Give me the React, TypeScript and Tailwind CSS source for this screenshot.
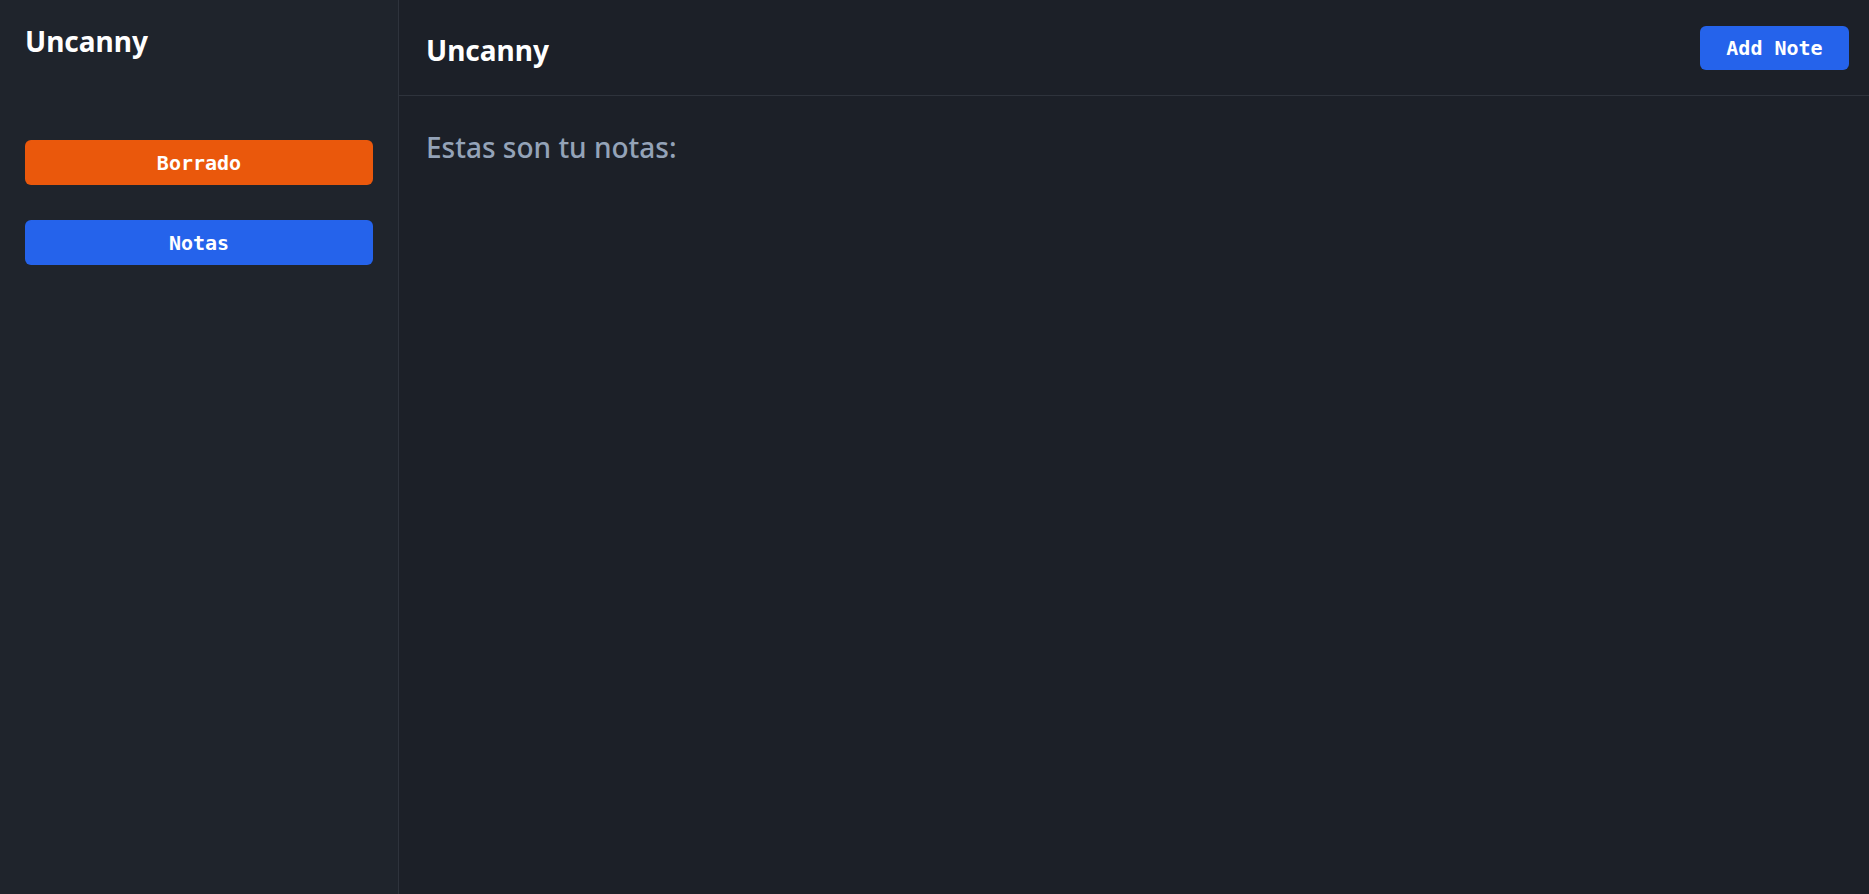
export default function App() {
  return (
    <div className="flex h-screen w-full bg-[#1c2028]" style={{ fontFamily: "'Noto Sans', 'Open Sans', sans-serif" }}>
      <aside className="flex w-[399px] shrink-0 flex-col border-r border-[#2e333c] bg-[#1f242c] px-[25px] pt-[22px]">
        <h1 className="text-[28px] font-bold leading-[38px] text-white">Uncanny</h1>
        <nav className="mt-[80px] flex flex-col gap-[35px]" style={{ fontFamily: "'DejaVu Sans Mono', monospace" }}>
          <button className="h-[45px] w-full rounded-md bg-[#ea580c] text-xl font-bold text-white">Borrado</button>
          <button className="h-[45px] w-full rounded-md bg-[#2563eb] text-xl font-bold text-white">Notas</button>
        </nav>
      </aside>
      <main className="flex flex-1 flex-col">
        <header className="flex h-[96px] items-center justify-between border-b border-[#2e333c] pl-[27px] pr-[20px]">
          <h2 className="mt-[4px] text-[28px] font-bold leading-[38px] text-white">Uncanny</h2>
          <button
            className="h-[44px] w-[149px] rounded-md bg-[#2563eb] text-xl font-bold text-white"
            style={{ fontFamily: "'DejaVu Sans Mono', monospace" }}
          >
            Add Note
          </button>
        </header>
        <section className="pl-[27px] pt-[32px]">
          <p className="text-[28px] font-medium leading-[38px] text-[#94a3b8]">Estas son tu notas:</p>
        </section>
      </main>
    </div>
  );
}
